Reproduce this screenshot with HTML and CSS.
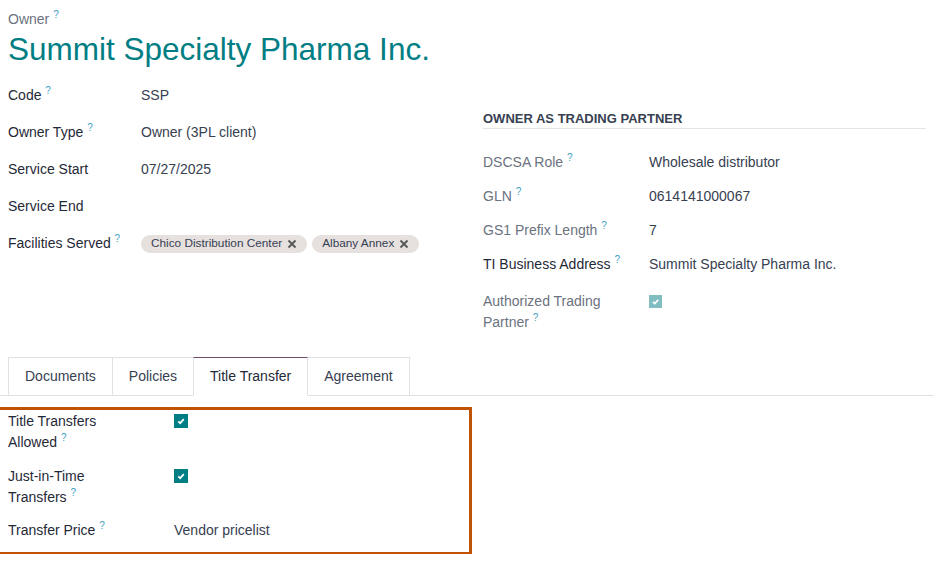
FILE: index.html
```html
<!DOCTYPE html>
<html lang="en">
<head>
<meta charset="utf-8">
<title>Summit Specialty Pharma Inc.</title>
<link rel="stylesheet" href="styles.css">
</head>
<body>
<div class="sheet">
  <div class="title-block">
    <div class="owner-label">Owner <sup class="hint">?</sup></div>
    <h1 class="title">Summit Specialty Pharma Inc.</h1>
  </div>

  <div class="main-grid">
    <div class="left-group">
      <div class="row"><div class="label">Code <sup class="hint">?</sup></div><div class="value">SSP</div></div>
      <div class="row"><div class="label">Owner Type <sup class="hint">?</sup></div><div class="value">Owner (3PL client)</div></div>
      <div class="row"><div class="label">Service Start</div><div class="value">07/27/2025</div></div>
      <div class="row"><div class="label">Service End</div><div class="value"></div></div>
      <div class="row"><div class="label">Facilities Served <sup class="hint">?</sup></div>
        <div class="value tags">
          <span class="tag">Chico Distribution Center <svg class="tag-x" viewBox="0 0 10 10" width="10" height="10"><path d="M1.5 1.5 L8.5 8.5 M8.5 1.5 L1.5 8.5" stroke="#555" stroke-width="1.8" fill="none"/></svg></span>
          <span class="tag">Albany Annex <svg class="tag-x" viewBox="0 0 10 10" width="10" height="10"><path d="M1.5 1.5 L8.5 8.5 M8.5 1.5 L1.5 8.5" stroke="#555" stroke-width="1.8" fill="none"/></svg></span>
        </div>
      </div>
    </div>

    <div class="right-group">
      <div class="group-header">Owner as Trading Partner</div>
      <div class="right-rows">
        <div class="rrow"><div class="label muted">DSCSA Role <sup class="hint">?</sup></div><div class="value">Wholesale distributor</div></div>
        <div class="rrow"><div class="label muted">GLN <sup class="hint">?</sup></div><div class="value">0614141000067</div></div>
        <div class="rrow"><div class="label muted">GS1 Prefix Length <sup class="hint">?</sup></div><div class="value">7</div></div>
        <div class="rrow rrow-tall"><div class="label">TI Business Address <sup class="hint">?</sup></div><div class="value">Summit Specialty Pharma Inc.</div></div>
        <div class="rrow"><div class="label muted narrow">Authorized Trading Partner <sup class="hint">?</sup></div>
          <div class="value"><span class="check disabled"><svg viewBox="0 0 13 13" width="13" height="13"><path d="M4 6.8 L5.8 8.5 L9.2 4.8" stroke="#fff" stroke-width="1.7" fill="none"/></svg></span></div>
        </div>
      </div>
    </div>
  </div>

  <div class="tabs">
    <div class="tab">Documents</div>
    <div class="tab">Policies</div>
    <div class="tab active">Title Transfer</div>
    <div class="tab">Agreement</div>
  </div>

  <div class="tab-pane">
    <div class="highlight"></div>
    <div class="prow"><div class="label plabel">Title Transfers Allowed <sup class="hint">?</sup></div>
      <div class="value"><span class="check"><svg viewBox="0 0 14 14" width="14" height="14"><path d="M4.3 7.3 L6.2 9.1 L9.8 5.2" stroke="#fff" stroke-width="1.8" fill="none"/></svg></span></div>
    </div>
    <div class="prow"><div class="label plabel">Just-in-Time Transfers <sup class="hint">?</sup></div>
      <div class="value"><span class="check"><svg viewBox="0 0 14 14" width="14" height="14"><path d="M4.3 7.3 L6.2 9.1 L9.8 5.2" stroke="#fff" stroke-width="1.8" fill="none"/></svg></span></div>
    </div>
    <div class="prow"><div class="label plabel">Transfer Price <sup class="hint">?</sup></div><div class="value">Vendor pricelist</div></div>
  </div>
</div>
</body>
</html>
```

FILE: styles.css
```css
* { box-sizing: border-box; }

html, body {
  margin: 0;
  padding: 0;
  background: #fff;
}

body {
  font-family: "Liberation Sans", Arial, sans-serif;
  font-size: 14px;
  line-height: 21px;
  color: #374151;
  overflow: hidden;
}

.sheet {
  padding: 9px 8px 0 8px;
}

.hint {
  font-size: 10px;
  line-height: 0;
  color: #3fa1c6;
  vertical-align: baseline;
  position: relative;
  top: -0.6em;
}

.owner-label {
  color: #6b7280;
  line-height: 21px;
}

.title {
  margin: 0;
  font-size: 31.5px;
  line-height: 38px;
  font-weight: normal;
  color: #017e84;
}

.main-grid {
  margin-top: 9px;
  display: grid;
  grid-template-columns: 1fr 1fr;
  column-gap: 32px;
  align-items: start;
}

.row {
  display: grid;
  grid-template-columns: 133px 1fr;
  padding: 8px 0;
  min-height: 37px;
}

.label {
  color: #1f2937;
}

.label.muted {
  color: #6b7280;
}

.value {
  color: #374151;
}

.tags {
  display: flex;
  align-items: center;
  gap: 5px;
  height: 21px;
}

.tag {
  display: inline-flex;
  align-items: center;
  height: 18px;
  padding: 0 10px 0 10px;
  border-radius: 9px;
  background: #e6e0df;
  color: #374151;
  font-size: 11.8px;
  white-space: nowrap;
}

.tag-x {
  margin-left: 5px;
}

.right-group {
  margin-top: 33px;
}

.group-header {
  font-size: 13px;
  line-height: 18px;
  font-weight: bold;
  text-transform: uppercase;
  color: #374151;
  border-bottom: 1px solid #e2e4e7;
}

.right-rows {
  margin-top: 17px;
}

.rrow {
  display: grid;
  grid-template-columns: 166px 1fr;
  padding-top: 6px;
  min-height: 34px;
}

.rrow-tall {
  min-height: 37px;
}

.narrow {
  max-width: 130px;
}

.check {
  display: block;
  width: 14px;
  height: 14px;
  background: #017e84;
  margin-top: 3px;
}

.check svg {
  display: block;
}

.check.disabled {
  width: 13px;
  height: 13px;
  background: #80bec1;
  margin-top: 4px;
}

.tabs {
  margin: 24px -8px 0 -8px;
  padding-left: 8px;
  display: flex;
  border-bottom: 1px solid #dee2e6;
}

.tab {
  padding: 8px 16px;
  border: 1px solid #dee2e6;
  margin-bottom: -1px;
  margin-left: -1px;
  color: #374151;
  background: #fff;
}

.tab:first-child {
  margin-left: 0;
}

.tab.active {
  border-top-color: #714b67;
  border-bottom-color: #fff;
  color: #1f2937;
  position: relative;
}

.tab-pane {
  position: relative;
  padding-top: 15px;
}

.highlight {
  position: absolute;
  left: -11px;
  top: 11px;
  width: 475px;
  height: 148px;
  border: 3px solid #bf5300;
  pointer-events: none;
}

.prow {
  display: grid;
  grid-template-columns: 166px 1fr;
  margin-bottom: 12.5px;
}

.plabel {
  max-width: 130px;
}
```
